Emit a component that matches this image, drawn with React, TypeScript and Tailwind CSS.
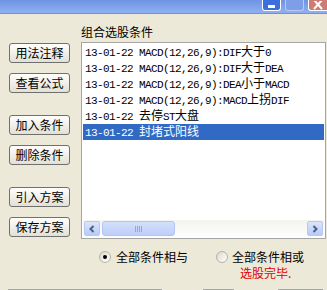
const rows = [
  '13-01-22 MACD(12,26,9):DIF大于0',
  '13-01-22 MACD(12,26,9):DIF大于DEA',
  '13-01-22 MACD(12,26,9):DEA小于MACD',
  '13-01-22 MACD(12,26,9):MACD上拐DIF',
  '13-01-22 去停ST大盘',
  '13-01-22 封堵式阳线',
];

// ascii runs in a narrow mono face, cjk in the sans face
const Mixed = ({ text }: { text: string }) => {
  const parts = text.split(/([\x20-\x7e]+)/).filter(Boolean);
  return (
    <>
      {parts.map((p, i) =>
        /^[\x20-\x7e]+$/.test(p) ? (
          <span key={i} className="font-['Liberation_Mono',monospace] text-[11px] tracking-[-0.6px]">
            {p}
          </span>
        ) : (
          <span key={i}>{p}</span>
        )
      )}
    </>
  );
};

const Btn = ({ label, className = '' }: { label: string; className?: string }) => (
  <div
    className={`h-[20px] w-[61px] rounded-[3px] border border-[#707070] bg-gradient-to-b from-white to-[#e3e0d3] flex items-center justify-center text-[12px] leading-none ${className}`}
  >
    {label}
  </div>
);

const Radio = ({ checked }: { checked?: boolean }) => (
  <div className="w-[12px] h-[12px] rounded-full border border-[#b5b2a6] bg-gradient-to-br from-[#dcd9cc] to-white flex items-center justify-center">
    {checked && <div className="w-[4px] h-[4px] rounded-full bg-black" />}
  </div>
);

const App = () => {
  return (
    <div className="w-[327px] h-[290px] overflow-hidden bg-[#ece9d8] font-['Noto_Sans_CJK_SC',sans-serif] text-[12px] text-black">
      {/* title bar, cut off at the top */}
      <div className="h-[14px] bg-gradient-to-b from-[#7093e4] to-[#8fb0f2] border-b border-[#6f8fde] flex justify-end items-start gap-[4px]">
        <div className="w-[19px] h-[11px] rounded-b-[3px] border border-t-0 border-white bg-[#3d6ee0] flex items-end justify-center pb-[2px]">
          <div className="w-[7px] h-[3px] bg-white" />
        </div>
        <div className="w-[19px] h-[11px] rounded-b-[3px] border border-t-0 border-[#b9cbf5] bg-[#7e9ee8]" />
        <div className="w-[19px] h-[11px] rounded-bl-[3px] border border-t-0 border-r-0 border-white bg-[#cd7b74] flex items-center justify-center">
          <svg width="11" height="9" viewBox="0 0 11 9">
            <path d="M1 -1 L9 8 M9 -1 L1 8" stroke="white" strokeWidth="2" />
          </svg>
        </div>
      </div>

      <div className="flex">
        <div className="w-[81px] pl-[9px] pt-[29px] flex flex-col">
          <Btn label="用法注释" />
          <Btn label="查看公式" className="mt-[10px]" />
          <Btn label="加入条件" className="mt-[22px]" />
          <Btn label="删除条件" className="mt-[10px]" />
          <Btn label="引入方案" className="mt-[22px]" />
          <Btn label="保存方案" className="mt-[10px]" />
        </div>

        <div className="pt-[9px]">
          <div className="h-[19px] leading-[16px] pt-[1px]">组合选股条件</div>
          <div className="w-[245px] h-[197px] border border-[#a5a5a5] bg-white flex flex-col p-[1px]">
            <div className="flex-1">
              {rows.map((r, i) => (
                <div
                  key={i}
                  className={`h-[16px] leading-[14px] pl-[2px] whitespace-nowrap ${
                    i === rows.length - 1 ? 'bg-[#316ac5] text-white' : ''
                  }`}
                >
                  <Mixed text={r} />
                </div>
              ))}
            </div>
            {/* horizontal scrollbar */}
            <div className="h-[17px] bg-gradient-to-b from-[#f4f3ee] to-[#fefefe] flex items-center gap-[2px] px-[1px]">
              <div className="w-[16px] h-[15px] rounded-[2px] border border-[#b7c9f2] bg-gradient-to-b from-[#dbe5fc] to-[#b8cbf6] flex items-center justify-center">
                <svg width="6" height="8" viewBox="0 0 6 8">
                  <path d="M4.5 1 L1.5 4 L4.5 7" stroke="#4d6185" strokeWidth="2" fill="none" />
                </svg>
              </div>
              <div className="w-[73px] h-[15px] rounded-[3px] border border-[#b2c4ef] bg-gradient-to-b from-[#d3e0fc] to-[#bccefa] flex items-center justify-center gap-[1px]">
                <div className="w-[1px] h-[6px] bg-[#8ea8e4]" />
                <div className="w-[1px] h-[6px] bg-[#8ea8e4]" />
                <div className="w-[1px] h-[6px] bg-[#8ea8e4]" />
                <div className="w-[1px] h-[6px] bg-[#8ea8e4]" />
              </div>
              <div className="flex-1" />
              <div className="w-[16px] h-[15px] rounded-[2px] border border-[#b7c9f2] bg-gradient-to-b from-[#dbe5fc] to-[#b8cbf6] flex items-center justify-center">
                <svg width="6" height="8" viewBox="0 0 6 8">
                  <path d="M1.5 1 L4.5 4 L1.5 7" stroke="#4d6185" strokeWidth="2" fill="none" />
                </svg>
              </div>
            </div>
          </div>
        </div>
      </div>

      {/* and / or */}
      <div className="mt-[10px] h-[16px] flex items-center">
        <div className="ml-[99px] flex items-center gap-[5px]">
          <Radio checked />
          <span>全部条件相与</span>
        </div>
        <div className="ml-[28px] flex items-center gap-[4px]">
          <Radio />
          <span>全部条件相或</span>
        </div>
      </div>
      <div className="h-[16px] pl-[240px] text-[#e00000] leading-[16px]">选股完毕.</div>

      {/* bottom status strip, mostly off screen */}
      <div className="mt-[8px] flex items-start">
        <div className="ml-[8px] w-[154px] h-[18px] border border-[#a5a5a5] bg-[#ece9d8]" />
        <span className="ml-[10px] leading-[14px]">品种数</span>
        <div className="ml-[-5px] w-[31px] h-[18px] border border-[#a5a5a5] bg-white" />
        <span className="ml-[4px] leading-[14px]">选中数</span>
        <div className="ml-[4px] w-[45px] h-[18px] border border-[#a5a5a5] bg-white" />
      </div>
    </div>
  );
};

export default App;
